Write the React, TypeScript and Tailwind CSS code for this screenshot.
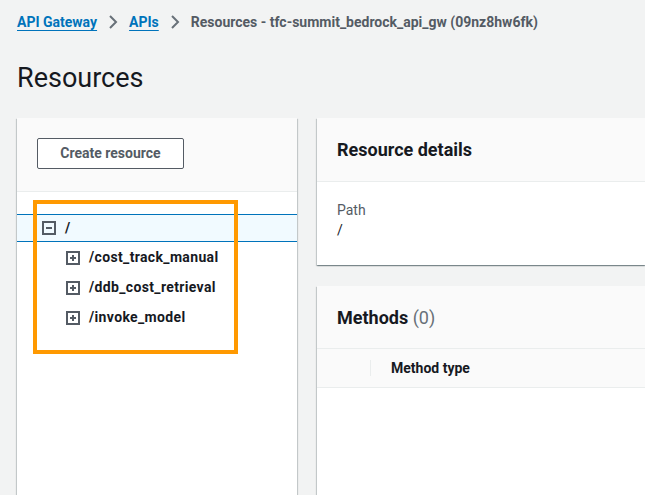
const Chevron = () => (
  <svg width="16" height="16" viewBox="0 0 16 16" className="mx-[8px] shrink-0">
    <polyline points="5,2 11,8 5,14" fill="none" stroke="#687078" strokeWidth="2" />
  </svg>
);

const ToggleIcon = ({ open }: { open: boolean }) => (
  <svg width="14" height="14" viewBox="0 0 14 14" className="shrink-0">
    <rect x="1" y="1" width="12" height="12" fill="none" stroke="#545b64" strokeWidth="2" />
    <line x1="4" y1="7" x2="10" y2="7" stroke="#545b64" strokeWidth="2" />
    {!open && <line x1="7" y1="4" x2="7" y2="10" stroke="#545b64" strokeWidth="2" />}
  </svg>
);

const children = ["/cost_track_manual", "/ddb_cost_retrieval", "/invoke_model"];

const panel =
  "bg-white shadow-[0_1px_1px_0_rgba(0,28,36,0.3),1px_1px_1px_0_rgba(0,28,36,0.15),-1px_1px_1px_0_rgba(0,28,36,0.15)]";

export default function App() {
  return (
    <div className="flex h-[495px] flex-col overflow-hidden bg-[#f2f3f3] pl-[17px] font-['Roboto',sans-serif] text-[#16191f]">
      <nav className="flex h-[20px] items-center mt-[12px] text-[14px] font-bold leading-[20px]">
        <a href="#" className="text-[#0073bb] underline underline-offset-[3px]">
          API Gateway
        </a>
        <Chevron />
        <a href="#" className="text-[#0073bb] underline underline-offset-[3px]">
          APIs
        </a>
        <Chevron />
        <span className="text-[#545b64]">Resources - tfc-summit_bedrock_api_gw (09nz8hw6fk)</span>
      </nav>

      <h1 className="mt-[28px] text-[27px] font-normal leading-[36px]">Resources</h1>

      <div className="mt-[22px] grid flex-1 grid-cols-[280px_1fr] gap-5">
        <div className={`relative flex flex-col ${panel}`}>
          <div className="h-[74px] border-b border-[#eaeded] bg-[#fafafa] px-5 pt-5">
            <button className="h-[31px] w-[147px] rounded-[2px] border border-[#545b64] bg-white text-[14px] font-bold text-[#545b64]">
              Create resource
            </button>
          </div>
          <div className="pt-[22px] text-[14px] font-bold tracking-[0.35px]">
            <div className="flex h-[28px] items-center gap-[9px] border-y border-[#0073bb] bg-[#f1faff] pl-[25px]">
              <ToggleIcon open />
              <span>/</span>
            </div>
            {children.map((c) => (
              <div key={c} className="flex h-[30px] items-center gap-[9px] pl-[49px] pt-[1px]">
                <ToggleIcon open={false} />
                <span>{c}</span>
              </div>
            ))}
          </div>
          <div className="pointer-events-none absolute left-[16px] top-[82px] h-[154px] w-[205px] border-4 border-[#ff9900]" />
        </div>

        <div className="flex flex-col gap-[21px]">
          <div className={`h-[147px] ${panel}`}>
            <div className="flex h-[64px] items-center border-b border-[#eaeded] bg-[#fafafa] px-5">
              <h2 className="text-[18px] font-bold">Resource details</h2>
            </div>
            <div className="px-5 pt-[18px] text-[14px] leading-[20px]">
              <div className="text-[#545b64]">Path</div>
              <div>/</div>
            </div>
          </div>

          <div className={`flex-1 ${panel}`}>
            <div className="flex h-[63px] items-center border-b border-[#eaeded] bg-[#fafafa] px-5">
              <h2 className="text-[18px] font-bold">
                Methods <span className="font-normal text-[#687078]">(0)</span>
              </h2>
            </div>
            <div className="flex h-[39px] items-center border-b border-[#eaeded] bg-[#fafafa] text-[14px] font-bold">
              <div className="h-[16px] w-[54px] border-r border-[#eaeded]" />
              <div className="pl-5">Method type</div>
            </div>
          </div>
        </div>
      </div>
    </div>
  );
}
